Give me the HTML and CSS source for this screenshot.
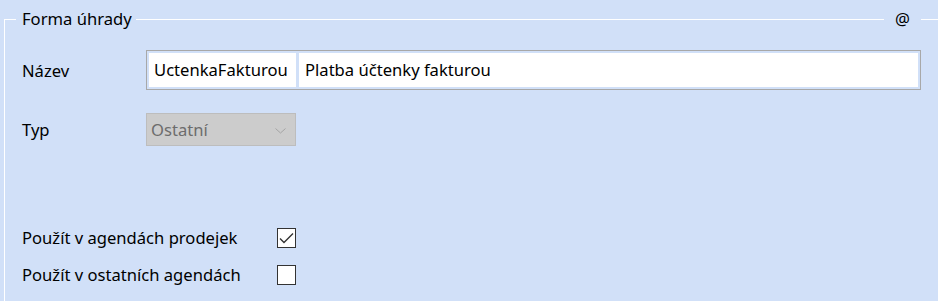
FILE: index.html
```html
<!DOCTYPE html>
<html lang="cs">

<head>
    <meta charset="UTF-8">
    <meta name="viewport" content="width=device-width, initial-scale=1.0">
    <title>Forma úhrady</title>
    <link rel="stylesheet" href="styles.css">
</head>

<body>
    <section class="group">
        <div class="group-head">
            <span class="group-title">Forma úhrady</span>
            <span class="group-at">@</span>
        </div>

        <div class="row name-row">
            <label class="row-label" for="code">Název</label>
            <div class="name-box">
                <input class="code-field" id="code" type="text" value="UctenkaFakturou">
                <input class="text-field" id="name" type="text" value="Platba účtenky fakturou">
            </div>
        </div>

        <div class="row type-row">
            <label class="row-label">Typ</label>
            <div class="combo">
                <span>Ostatní</span>
                <svg class="chevron" width="11" height="6" viewBox="0 0 11 6">
                    <polyline points="0.5,0.5 5.5,5 10.5,0.5" fill="none" stroke="#a4a4a4" stroke-width="1"/>
                </svg>
            </div>
        </div>

        <div class="row check-row first">
            <span class="check-label">Použít v agendách prodejek</span>
            <span class="check">
                <svg width="17" height="18" viewBox="0 0 17 18">
                    <polyline points="2,9.5 6,13.5 15,4.5" fill="none" stroke="#333" stroke-width="1.4"/>
                </svg>
            </span>
        </div>

        <div class="row check-row">
            <span class="check-label">Použít v ostatních agendách</span>
            <span class="check"></span>
        </div>
    </section>
</body>

</html>
```

FILE: styles.css
```css
body {
    font-family: 'Noto Sans', sans-serif;
    font-size: 16.6px;
    color: #000;
    background-color: #d1e0f8;
    margin: 0;
    padding: 0;
    overflow: hidden;
}

.group {
    margin: 19px 0 0 4px;
    border-top: 1px solid #fff;
    border-left: 1px solid #fff;
    min-height: 281px;
}

.group-head {
    display: flex;
    justify-content: space-between;
    margin-top: -13px;
    padding: 0 17px 0 11px;
    line-height: 24px;
}

.group-title {
    background-color: #d1e0f8;
    padding: 0 4px 0 6px;
}

.group-at {
    background-color: #d1e0f8;
    padding: 0 11px;
}

.row {
    display: flex;
    align-items: center;
    padding: 0 17px;
}

.row-label {
    width: 124px;
    flex-shrink: 0;
}

.name-row {
    height: 40px;
    margin-top: 19px;
}

.name-box {
    flex: 1;
    display: flex;
    gap: 3px;
    height: 40px;
    padding: 2px;
    border: 1px solid #a8a8a8;
    box-sizing: border-box;
}

.name-box input {
    font-family: inherit;
    font-size: 16.6px;
    color: #000;
    background-color: #fff;
    border: none;
    margin: 0;
    outline: none;
    box-sizing: border-box;
}

.code-field {
    width: 147px;
    padding: 0 0 2px 5px;
}

.text-field {
    flex: 1;
    padding: 0 0 2px 6px;
}

.type-row {
    height: 33px;
    margin-top: 23px;
}

.combo {
    width: 150px;
    height: 33px;
    display: flex;
    align-items: center;
    justify-content: space-between;
    padding: 0 9px 0 4px;
    background-color: #cccccc;
    border: 1px solid #bdbdbd;
    box-sizing: border-box;
    color: #6d6d6d;
}

.chevron {
    margin-top: 2px;
}

.check-row {
    height: 37px;
}

.check-row.first {
    margin-top: 73px;
}

.check-label {
    width: 255px;
    flex-shrink: 0;
}

.check {
    width: 19px;
    height: 20px;
    border: 1px solid #333;
    background-color: #fff;
    box-sizing: border-box;
    display: flex;
}
```
